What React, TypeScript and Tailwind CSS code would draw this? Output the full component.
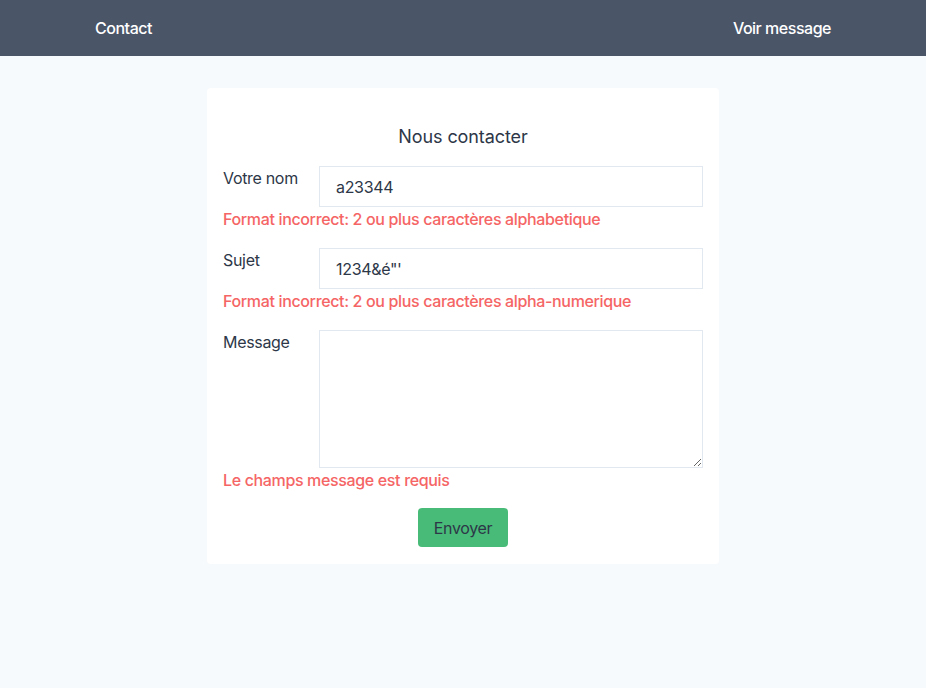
import React from "react";

export default function App() {
  return (
    <div
      className="min-h-[688px] bg-[#f7fafc] text-[#2d3748] tracking-[-0.02em]"
      style={{ fontFamily: "Inter, 'Noto Sans', sans-serif" }}
    >
      <nav className="h-14 bg-[#4a5568] flex items-center justify-between px-[95px] text-white font-medium text-base tracking-[-0.03em]">
        <a>Contact</a>
        <a>Voir message</a>
      </nav>
      <div className="flex justify-center pt-8">
        <form className="w-[512px] bg-white rounded px-4 pt-[35px] pb-[17px]">
          <h1 className="text-lg leading-7 text-center mb-[15px] tracking-[-0.005em]">Nous contacter</h1>
          <div className="flex items-start">
            <label className="w-24 leading-6">Votre nom</label>
            <input
              className="flex-1 h-[41px] border border-[#e2e8f0] px-4 text-base outline-none tracking-[-0.02em]"
              defaultValue="a23344"
            />
          </div>
          <p className="text-[#f56565] font-medium leading-6 mb-[17px] tracking-[-0.022em]">
            Format incorrect: 2 ou plus caractères alphabetique
          </p>
          <div className="flex items-start">
            <label className="w-24 leading-6">Sujet</label>
            <input
              className="flex-1 h-[41px] border border-[#e2e8f0] px-4 text-base outline-none tracking-[-0.02em]"
              defaultValue={"1234&é\"'"}
            />
          </div>
          <p className="text-[#f56565] font-medium leading-6 mb-[17px] tracking-[-0.022em]">
            Format incorrect: 2 ou plus caractères alpha-numerique
          </p>
          <div className="flex items-start">
            <label className="w-24 leading-6">Message</label>
            <textarea className="flex-1 h-[138px] border border-[#e2e8f0] px-4 py-2 text-base outline-none block" />
          </div>
          <p className="text-[#f56565] font-medium leading-6 mb-4 tracking-[-0.022em]">
            Le champs message est requis
          </p>
          <div className="flex justify-center">
            <button
              type="button"
              className="bg-[#48bb78] text-[#2d3748] rounded px-4 h-[39px] leading-6 tracking-[-0.02em]"
            >
              Envoyer
            </button>
          </div>
        </form>
      </div>
    </div>
  );
}
